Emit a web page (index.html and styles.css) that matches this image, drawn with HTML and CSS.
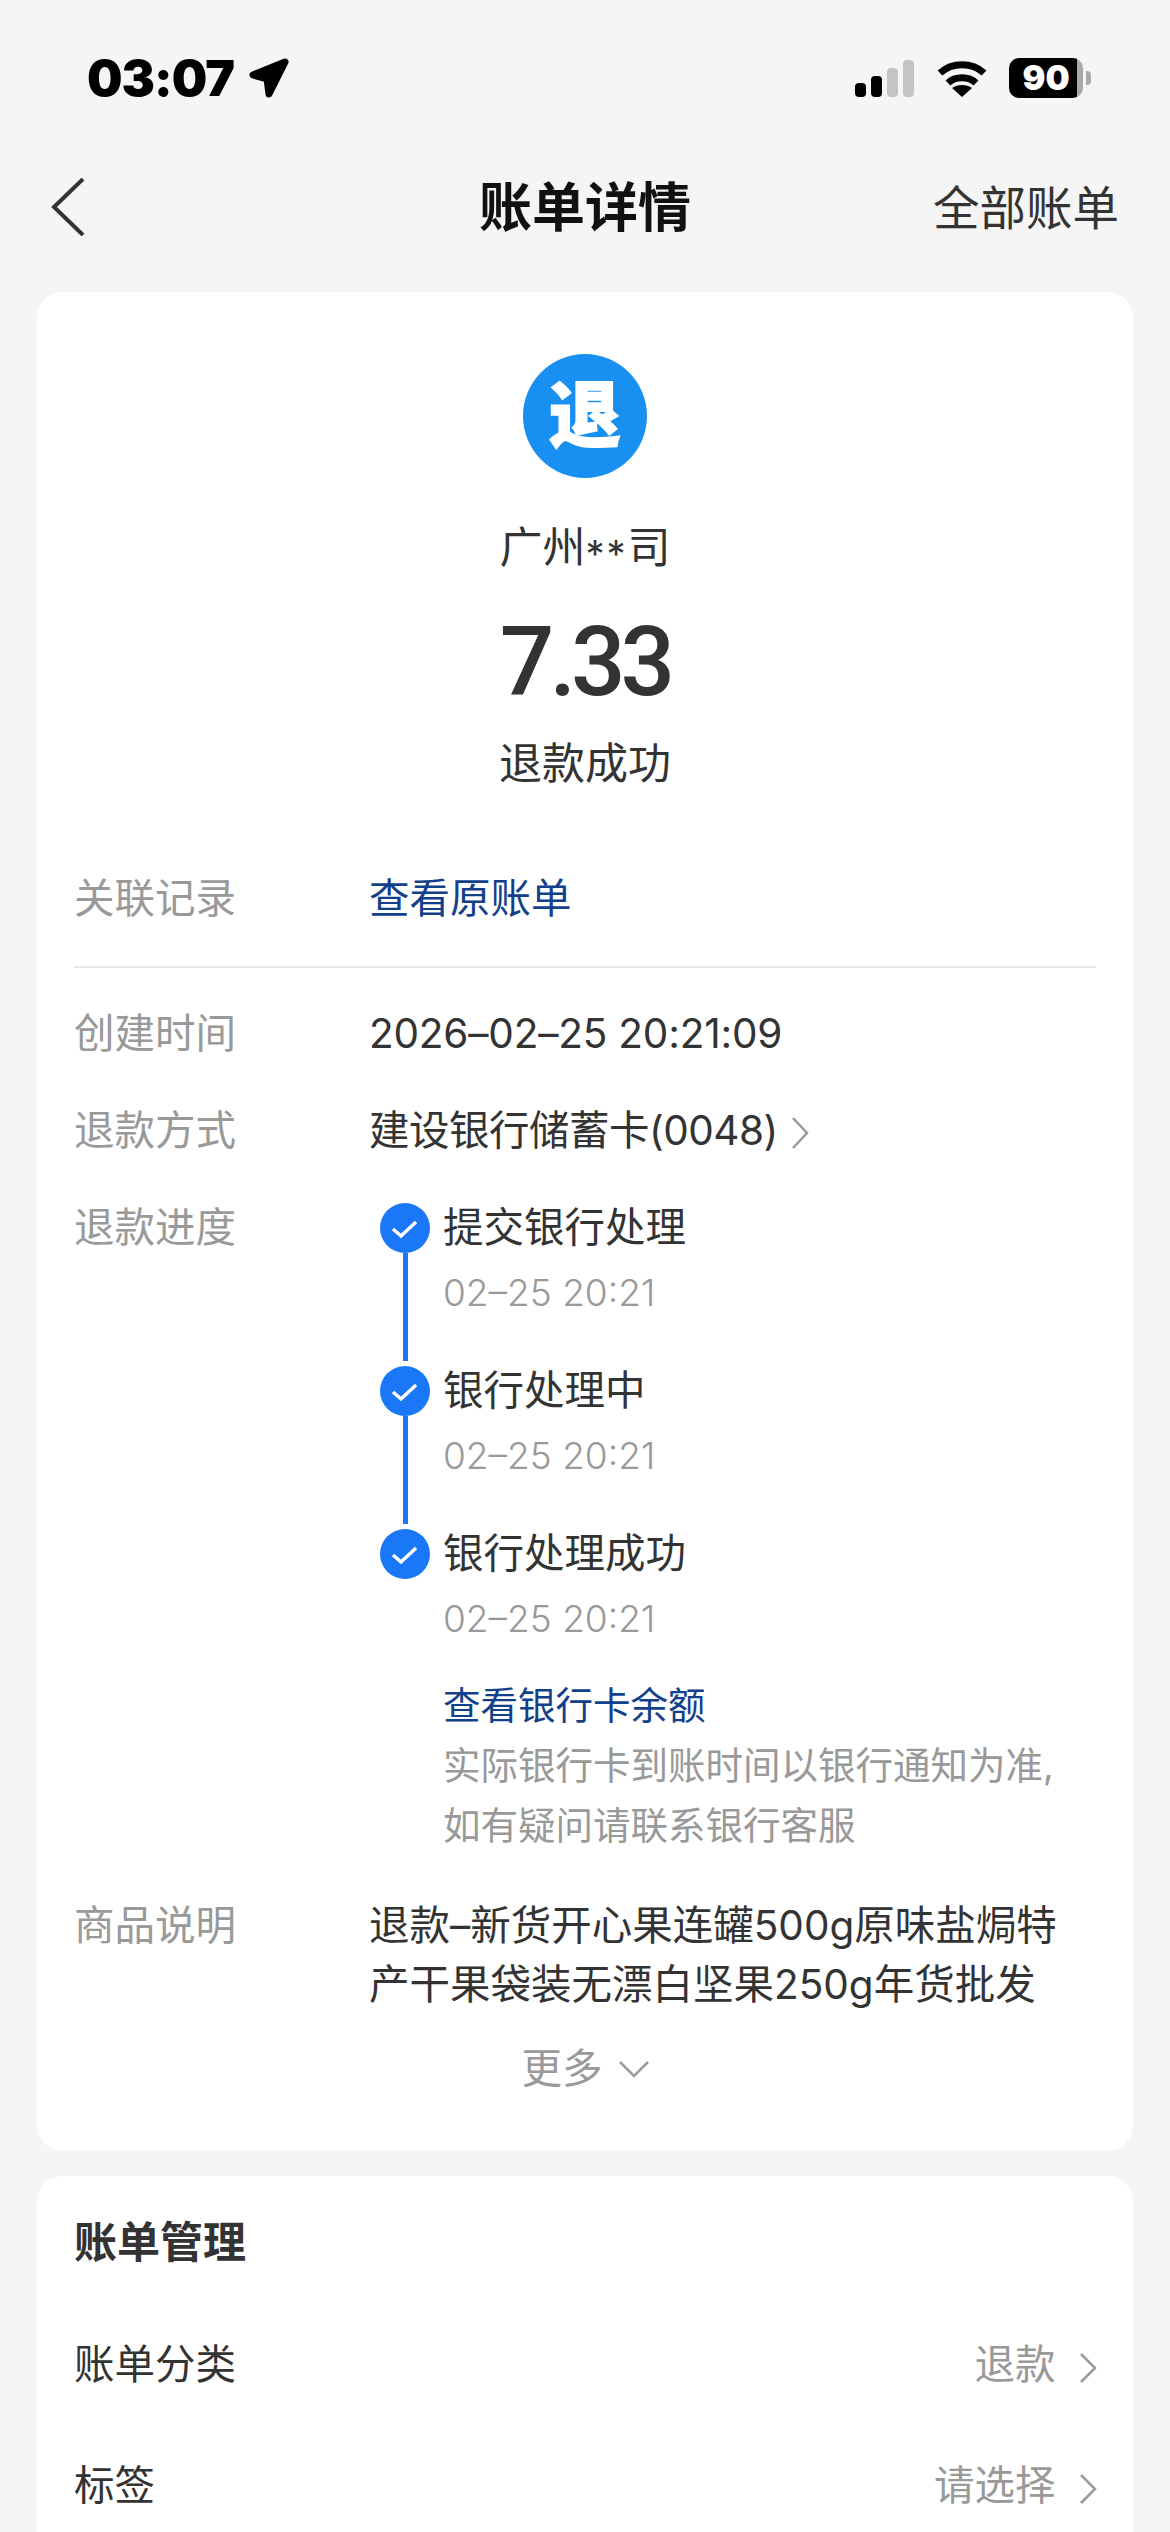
FILE: index.html
```html
<!DOCTYPE html>
<html>

<head>
    <title>账单详情</title>
    <link rel="stylesheet" href="styles.css">
</head>

<body>
    <div class="status-bar">
        <div class="status-left">
            <span class="clock">03:07</span>
            <svg class="location" width="42" height="42" viewBox="0 0 42 42">
                <path d="M37 5 L5 18 L19 22 L21 37 Z" fill="#000" stroke="#000" stroke-width="7" stroke-linejoin="round"/>
            </svg>
        </div>
        <div class="status-right">
            <div class="signal">
                <i class="bar bar-1"></i>
                <i class="bar bar-2"></i>
                <i class="bar bar-3"></i>
                <i class="bar bar-4"></i>
            </div>
            <svg class="wifi" width="50" height="38" viewBox="0 0 50 38">
                <path d="M3 14 C15 3 35 3 47 14" fill="none" stroke="#000" stroke-width="7"/>
                <path d="M11 24 C18 17 32 17 39 24" fill="none" stroke="#000" stroke-width="7"/>
                <path d="M25 38 L15 29 C20 25 30 25 35 29 Z" fill="#000"/>
            </svg>
            <div class="battery">
                <span class="battery-body">90</span>
                <i class="battery-cap"></i>
            </div>
        </div>
    </div>

    <div class="nav">
        <svg class="back" width="34" height="58" viewBox="0 0 34 58">
            <path d="M32 1 L3 29 L32 57" fill="none" stroke="#333" stroke-width="4"/>
        </svg>
        <h1>账单详情</h1>
        <a class="nav-link">全部账单</a>
    </div>

    <div class="main">
        <div class="card detail-card">
            <div class="summary">
                <div class="logo">退</div>
                <p class="merchant">广州<span class="mask">**</span>司</p>
                <p class="amount">7.33</p>
                <p class="result">退款成功</p>
            </div>

            <div class="row">
                <span class="label">关联记录</span>
                <a class="link">查看原账单</a>
            </div>
            <hr>

            <div class="row">
                <span class="label">创建时间</span>
                <span class="value date">2026–02–25 20:21:09</span>
            </div>
            <div class="row">
                <span class="label">退款方式</span>
                <span class="value pay-method">建设银行储蓄卡(0048)
                    <svg class="chevron" width="18" height="32" viewBox="0 0 18 32">
                        <path d="M2 1 L16 16 L2 31" fill="none" stroke="#999" stroke-width="2.5"/>
                    </svg>
                </span>
            </div>
            <div class="row">
                <span class="label">退款进度</span>
                <div class="timeline">
                    <div class="step">
                        <div class="marker">
                            <svg width="50" height="50" viewBox="0 0 50 50">
                                <circle cx="25" cy="25" r="25" fill="#1a77f7"/>
                                <path d="M13 26 L21 33 L36 19" fill="none" stroke="#fff" stroke-width="3.5"/>
                            </svg>
                            <i class="marker-line"></i>
                        </div>
                        <div>
                            <p class="step-title">提交银行处理</p>
                            <p class="step-time">02–25 20:21</p>
                        </div>
                    </div>
                    <div class="step">
                        <div class="marker">
                            <svg width="50" height="50" viewBox="0 0 50 50">
                                <circle cx="25" cy="25" r="25" fill="#1a77f7"/>
                                <path d="M13 26 L21 33 L36 19" fill="none" stroke="#fff" stroke-width="3.5"/>
                            </svg>
                            <i class="marker-line"></i>
                        </div>
                        <div>
                            <p class="step-title">银行处理中</p>
                            <p class="step-time">02–25 20:21</p>
                        </div>
                    </div>
                    <div class="step step-last">
                        <div class="marker">
                            <svg width="50" height="50" viewBox="0 0 50 50">
                                <circle cx="25" cy="25" r="25" fill="#1a77f7"/>
                                <path d="M13 26 L21 33 L36 19" fill="none" stroke="#fff" stroke-width="3.5"/>
                            </svg>
                        </div>
                        <div>
                            <p class="step-title">银行处理成功</p>
                            <p class="step-time">02–25 20:21</p>
                            <a class="link balance-link">查看银行卡余额</a>
                            <p class="step-note">实际银行卡到账时间以银行通知为准,<br>如有疑问请联系银行客服</p>
                        </div>
                    </div>
                </div>
            </div>
            <div class="row row-desc">
                <span class="label">商品说明</span>
                <span class="value desc">退款–新货开心果连罐500g原味盐焗特<br>产干果袋装无漂白坚果250g年货批发</span>
            </div>
            <div class="more">
                更多
                <svg width="30" height="18" viewBox="0 0 30 18">
                    <path d="M1 2 L15 16 L29 2" fill="none" stroke="#999" stroke-width="2.5"/>
                </svg>
            </div>
        </div>

        <div class="card manage-card">
            <h2>账单管理</h2>
            <div class="manage-row">
                <span class="manage-name">账单分类</span>
                <span class="manage-value">退款
                    <svg class="chevron" width="18" height="30" viewBox="0 0 18 30">
                        <path d="M2 1 L16 15 L2 29" fill="none" stroke="#999" stroke-width="2.5"/>
                    </svg>
                </span>
            </div>
            <div class="manage-row">
                <span class="manage-name">标签</span>
                <span class="manage-value">请选择
                    <svg class="chevron" width="18" height="30" viewBox="0 0 18 30">
                        <path d="M2 1 L16 15 L2 29" fill="none" stroke="#999" stroke-width="2.5"/>
                    </svg>
                </span>
            </div>
        </div>
    </div>
</body>

</html>
```

FILE: styles.css
```css
html, body {
    height: 2532px;
    overflow: hidden;
}

body {
    font-family: Inter, "Noto Sans CJK SC", sans-serif;
    background-color: #f5f5f5;
    color: #333;
    margin: 0;
    padding: 0;
    font-size: 40.5px;
}

p, h1, h2 {
    margin: 0;
    font-weight: normal;
}

/* status bar */
.status-bar {
    display: flex;
    justify-content: space-between;
    align-items: center;
    height: 42px;
    padding: 57px 79px 0 87px;
}

.status-left {
    display: flex;
    align-items: center;
    gap: 14px;
}

.clock {
    font-size: 50px;
    font-weight: 900;
    line-height: 42px;
    letter-spacing: -1px;
    color: #000;
}

.status-right {
    display: flex;
    align-items: center;
}

.signal {
    display: flex;
    align-items: flex-end;
    gap: 5px;
    height: 37px;
    margin-right: 23px;
}

.bar {
    width: 11px;
    border-radius: 4px;
    background-color: #000;
}

.bar-1 { height: 14px; }
.bar-2 { height: 21px; }
.bar-3 { height: 29px; background-color: #c4c4c4; }
.bar-4 { height: 37px; background-color: #c4c4c4; }

.wifi {
    margin-right: 22px;
}

.battery {
    display: flex;
    align-items: center;
}

.battery-body {
    width: 74px;
    height: 40px;
    border-radius: 10px;
    background: linear-gradient(to right, #000 68px, #a9a9a9 68px);
    color: #fff;
    font-size: 34px;
    font-weight: 900;
    line-height: 40px;
    text-align: center;
}

.battery-cap {
    width: 5px;
    height: 14px;
    margin-left: 3px;
    border-radius: 0 4px 4px 0;
    background-color: #a9a9a9;
}

/* nav */
.nav {
    display: grid;
    grid-template-columns: 1fr auto 1fr;
    align-items: center;
    height: 132px;
    margin-top: 42px;
    padding: 0 51px 0 51px;
}

.nav h1 {
    font-size: 53px;
    font-weight: 700;
    color: #111;
    margin-bottom: 6px;
}

.nav-link {
    justify-self: end;
    font-size: 46.5px;
    margin-bottom: 6px;
}

/* cards */
.main {
    padding: 19px 37px 0;
}

.card {
    background-color: #ffffff;
    border-radius: 26px;
    padding: 0 37px;
}

.detail-card {
    padding-bottom: 52px;
    margin-bottom: 25px;
}

.summary {
    display: flex;
    flex-direction: column;
    align-items: center;
    padding-top: 62px;
    margin-bottom: 76px;
}

.logo {
    width: 124px;
    height: 124px;
    border-radius: 50%;
    background-color: #1890f1;
    color: #fff;
    font-size: 72px;
    font-weight: 900;
    line-height: 122px;
    text-align: center;
    -webkit-text-stroke: 1.5px #fff;
}

.merchant {
    font-size: 43px;
    line-height: 60px;
    margin-top: 39px;
}

.mask {
    font-size: 38px;
    line-height: 0;
    letter-spacing: 2px;
    vertical-align: -5px;
}

.amount {
    font-family: Roboto, sans-serif;
    font-size: 96px;
    font-weight: 500;
    line-height: 110px;
    letter-spacing: -5px;
    margin-top: 30px;
    margin-bottom: -4px;
}

.result {
    font-size: 43px;
    line-height: 60px;
    margin-top: 20px;
}

/* rows */
.row {
    display: flex;
    line-height: 60px;
    margin-bottom: 37px;
}

.label {
    flex: none;
    width: 295px;
    color: #999;
}

.link {
    color: #12408a;
}

hr {
    border: none;
    border-top: 2px solid #e8e8e8;
    margin: 36px 0 36px;
}

.date {
    letter-spacing: -0.2px;
}

.pay-method {
    letter-spacing: -0.5px;
}

.chevron {
    margin-left: 2px;
    vertical-align: -4px;
}

/* timeline */
.step {
    display: flex;
    height: 163px;
}

.step-last {
    height: auto;
}

.marker {
    flex: none;
    display: flex;
    flex-direction: column;
    align-items: center;
    width: 50px;
    margin: 5px 13px 0 11px;
}

.marker svg {
    flex: none;
    display: block;
}

.marker-line {
    flex: 1;
    width: 5px;
    background-color: #1a77f7;
}

.step-time {
    font-size: 37px;
    font-weight: 300;
    line-height: 50px;
    margin-top: 10px;
    color: #999;
}

.balance-link {
    display: block;
    font-size: 37.5px;
    line-height: 50px;
    margin-top: 37px;
}

.step-note {
    font-size: 37.5px;
    line-height: 60px;
    margin-top: 5px;
    color: #999;
}

.row-desc {
    margin-top: 40px;
    margin-bottom: 0;
}

.desc {
    line-height: 59px;
}

.more {
    display: flex;
    justify-content: center;
    align-items: center;
    gap: 16px;
    line-height: 60px;
    margin-top: 25px;
    color: #999;
}

/* bill management */
.manage-card {
    height: 400px;
    padding-top: 36px;
}

.manage-card h2 {
    font-size: 43px;
    font-weight: 700;
    line-height: 60px;
    margin-bottom: 63px;
}

.manage-row {
    display: flex;
    justify-content: space-between;
    line-height: 60px;
    margin-bottom: 61px;
}

.manage-value {
    color: #999;
}

.manage-value .chevron {
    margin-left: 12px;
    margin-right: -1px;
}
```
